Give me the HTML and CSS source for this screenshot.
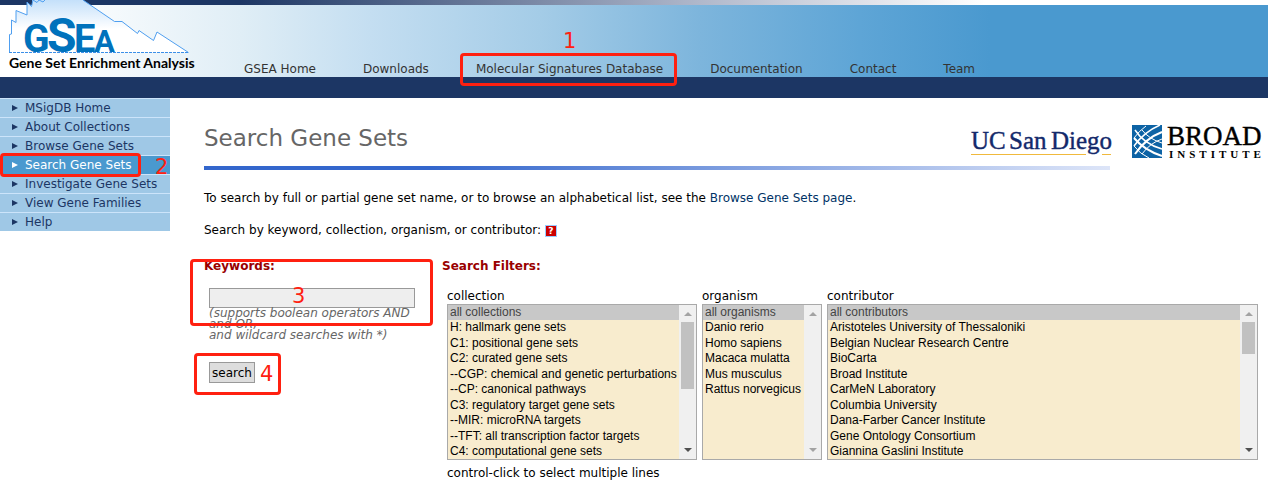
FILE: index.html
```html
<!DOCTYPE html>
<html lang="en">
<head>
<meta charset="utf-8">
<title>GSEA | MSigDB | Search Gene Sets</title>
<link rel="stylesheet" href="styles.css">
</head>
<body>
<div class="top-strip"></div>
<header class="banner">
  <a class="logo" href="#" aria-label="Gene Set Enrichment Analysis">
    <svg width="200" height="77" viewBox="0 0 200 77">
      <defs>
        <linearGradient id="peak" x1="0" y1="0" x2="0" y2="1">
          <stop offset="0" stop-color="#c4e0fa"/>
          <stop offset="0.55" stop-color="#fff"/>
        </linearGradient>
      </defs>
      <path d="M9.500 52.500V34.500L11.500 34V20L16 22.500V10.500L27 15V2L32 6V0H83L114.500 21.500H122L137.500 33.500L139 30.500L153.500 40.500L157 32L188.500 52.500Z" fill="url(#peak)"/>
      <path d="M9.500 52.500V34.500L11.500 34V20L16 22.500V10.500L27 15V2L31.500 6.500L33 0L37 2.500L39 0L43 2L45 0M83 0L114.500 21.500H122L137.500 33.500L139 30.500L153.500 40.500L157 32L188.500 52.500" fill="none" stroke="#4f9ff0" stroke-width="1"/>
      <path d="M9 52.500H189" stroke="#3b8fe8" stroke-dasharray="3 1"/>
      <g class="logo-mark">
        <text x="23" y="52" font-size="39">G</text>
        <text x="47" y="52" font-size="48">S</text>
        <text x="74" y="52" font-size="38">E</text>
        <text x="94" y="52" font-size="31">A</text>
      </g>
      <text class="logo-name" x="9" y="68">Gene Set Enrichment Analysis</text>
    </svg>
  </a>
  <nav class="main-nav">
    <a href="#">GSEA Home</a>
    <a href="#">Downloads</a>
    <a href="#">Molecular Signatures Database</a>
    <a href="#">Documentation</a>
    <a href="#">Contact</a>
    <a href="#">Team</a>
  </nav>
</header>
<div class="navy-bar"></div>
<div class="page">
  <nav class="side-nav">
    <a href="#">MSigDB Home</a>
    <a href="#">About Collections</a>
    <a href="#">Browse Gene Sets</a>
    <a class="current" href="#">Search Gene Sets</a>
    <a href="#">Investigate Gene Sets</a>
    <a href="#">View Gene Families</a>
    <a href="#">Help</a>
  </nav>
  <main class="content">
    <div class="title-row">
      <div class="title">
        <h1>Search Gene Sets</h1>
        <svg class="ucsd" width="141" height="30" viewBox="0 0 141 30" role="img" aria-label="UC San Diego">
          <path d="M0 26.500H115M131 26.500H140" stroke="#f0b93c"/>
          <g class="ucsd-text">
            <text x="0" y="21">UC</text>
            <text x="38" y="21">San</text>
            <text x="80" y="21">Diego</text>
          </g>
        </svg>
      </div>
      <svg class="broad" width="132" height="34" viewBox="0 0 132 34" role="img" aria-label="Broad Institute">
        <rect width="30" height="33" fill="#0d63a5"/>
        <g fill="none" stroke="#fff">
          <path d="M3 5Q12 19 30 24" stroke-width="1.500"/>
          <path d="M2 13Q12 25 30 31" stroke-width="2"/>
          <path d="M10 5Q17 14 30 18"/>
          <path d="M2 21Q8 29 17 33"/>
          <path d="M2 21Q12 7 28 0" stroke-width="1.500"/>
          <path d="M2 13Q7 6 14 1"/>
          <path d="M3 29Q14 13 30 7" stroke-width="2"/>
          <path d="M10 29Q18 18 30 14"/>
        </g>
        <text class="broad-big" x="35" y="20">BROAD</text>
        <text class="broad-small" x="37" y="33">INSTITUTE</text>
      </svg>
    </div>
    <p>To search by full or partial gene set name, or to browse an alphabetical list, see the <a href="#">Browse Gene Sets page</a>.</p>
    <p>Search by keyword, collection, organism, or contributor: <a class="help" href="#" aria-label="Help">?</a></p>
    <form class="search">
      <section class="keywords">
        <h2><label for="keywords">Keywords:</label></h2>
        <div class="keyword-body">
          <input id="keywords" type="text">
          <div class="hint">(supports boolean operators AND and OR,<br>and wildcard searches with *)</div>
          <button type="button">search</button>
        </div>
      </section>
      <section class="filters">
        <h2>Search Filters:</h2>
        <div class="lists">
          <div class="field collection">
            <label for="collection">collection</label>
            <div class="listbox">
              <select id="collection" multiple size="10">
                <option class="all">all collections</option>
                <option>H: hallmark gene sets</option>
                <option>C1: positional gene sets</option>
                <option>C2: curated gene sets</option>
                <option>--CGP: chemical and genetic perturbations</option>
                <option>--CP: canonical pathways</option>
                <option>C3: regulatory target gene sets</option>
                <option>--MIR: microRNA targets</option>
                <option>--TFT: all transcription factor targets</option>
                <option>C4: computational gene sets</option>
              </select>
              <div class="bar"><i class="up"></i><i class="thumb long"></i><i class="down"></i></div>
            </div>
          </div>
          <div class="field organism">
            <label for="organism">organism</label>
            <div class="listbox">
              <select id="organism" multiple size="10">
                <option class="all">all organisms</option>
                <option>Danio rerio</option>
                <option>Homo sapiens</option>
                <option>Macaca mulatta</option>
                <option>Mus musculus</option>
                <option>Rattus norvegicus</option>
              </select>
              <div class="bar"><i class="up"></i><i class="down off"></i></div>
            </div>
          </div>
          <div class="field contributor">
            <label for="contributor">contributor</label>
            <div class="listbox">
              <select id="contributor" multiple size="10">
                <option class="all">all contributors</option>
                <option>Aristoteles University of Thessaloniki</option>
                <option>Belgian Nuclear Research Centre</option>
                <option>BioCarta</option>
                <option>Broad Institute</option>
                <option>CarMeN Laboratory</option>
                <option>Columbia University</option>
                <option>Dana-Farber Cancer Institute</option>
                <option>Gene Ontology Consortium</option>
                <option>Giannina Gaslini Institute</option>
              </select>
              <div class="bar"><i class="up"></i><i class="thumb short"></i><i class="down"></i></div>
            </div>
          </div>
        </div>
        <div class="note">control-click to select multiple lines</div>
      </section>
    </form>
  </main>
</div>
<div class="mark mark-1"></div><div class="num num-1">1</div>
<div class="mark mark-2"></div><div class="num num-2">2</div>
<div class="mark mark-3"></div><div class="num num-3">3</div>
<div class="mark mark-4"></div><div class="num num-4">4</div>
</body>
</html>
```
FILE: styles.css
```css
* { box-sizing: border-box; }
body {
  margin: 0;
  position: relative;
  background: #fff;
  color: #000;
  font: 12px/16px Verdana, "DejaVu Sans", sans-serif;
}
a { text-decoration: none; }
.top-strip {
  height: 5px;
  background: linear-gradient(90deg, #1c3664 240px, #b0b8cb 700px, #fff 985px);
}
.banner {
  height: 72px;
  display: flex;
  align-items: flex-end;
  background: linear-gradient(90deg, #fff 50px, #e0eef6 240px, #c4def1 370px, #a4cce7 540px, #7db5dc 700px, #5ea5d6 860px, #4a99cf 990px);
}
.logo { width: 244px; flex: none; height: 77px; }
.logo svg { display: block; }
.logo-mark { fill: #0072bc; font-family: Roboto, sans-serif; font-weight: 700; }
.logo-name { font: 700 14px Lato, sans-serif; }
.main-nav { display: flex; gap: 47px; }
.main-nav a { color: #333; white-space: nowrap; }
.navy-bar { height: 21px; background: #1c3664; }
.page { display: flex; align-items: flex-start; }
.side-nav { width: 170px; flex: none; }
.side-nav a {
  display: flex;
  align-items: center;
  height: 19px;
  padding-left: 12px;
  border-top: 1px solid #cce4fa;
  background: #9fc8e6;
  color: #1c3664;
  white-space: nowrap;
}
.side-nav a::before {
  content: "";
  margin-right: 7px;
  border: 3px solid transparent;
  border-left: 6px solid currentColor;
  border-right: 0;
}
.side-nav .current { background: #4a99cf; color: #fff; }
.content { flex: 1; padding: 26px 10px 0 34px; }
.title-row { display: flex; margin-right: -6px; }
.title {
  flex: 1;
  display: flex;
  justify-content: space-between;
  margin-right: 22px;
  padding-bottom: 12px;
  background: linear-gradient(90deg, #36c 25%, #dde5f8) bottom / 100% 4px no-repeat;
}
.title .ucsd { margin: 4px -2px 0 0; overflow: visible; }
.broad { margin-top: 1px; overflow: visible; }
.ucsd-text { font: 25px "Liberation Serif", serif; fill: #13296b; stroke: #13296b; stroke-width: 0.400; }
.broad-big { font: 27px "Liberation Serif", serif; stroke: #000; stroke-width: 0.400; }
.broad-small { font: 700 11px "Liberation Serif", serif; letter-spacing: 4px; }
h1 { margin: 0; font-size: 23px; line-height: 28px; font-weight: 400; color: #666; }
p { margin: 20px 0 -4px; }
p a { color: #036; }
.help {
  display: inline-block;
  width: 12px;
  height: 12px;
  border: 1px solid #9cf;
  background: #c00;
  color: #fff;
  font: 700 9px/10px "DejaVu Sans", sans-serif;
  text-align: center;
}
.search { display: flex; margin-top: 24px; }
h2 { margin: 0; font-size: 12px; line-height: 16px; color: #900; }
.keywords { width: 238px; flex: none; }
.keyword-body { width: 211px; padding: 14px 0 0 5px; }
input {
  display: block;
  width: 100%;
  height: 20px;
  border: 1px solid #999;
  background: #eee;
}
.hint { color: #666; font-style: italic; line-height: 11px; }
button {
  display: block;
  margin-top: 21px;
  padding: 0 2px;
  height: 21px;
  border: 1px solid #999;
  background: #ddd;
  color: #000;
  font: inherit;
}
.filters { flex: 1; }
.lists { display: flex; gap: 5px; padding: 14px 0 0 5px; }
.field label { display: block; }
.collection { width: 250px; }
.organism { width: 120px; }
.contributor { flex: 1; }
.listbox { display: flex; border: 1px solid #a9a9a9; }
select {
  flex: 1;
  min-width: 0;
  height: 154px;
  padding: 0;
  border: 0;
  border-radius: 0;
  background: #f8ecce;
  color: #000;
  font: 12px "Liberation Sans", Arial, sans-serif;
  overflow: hidden;
  scrollbar-width: none;
}
option { height: 15px; min-height: 0; padding: 0 2px; line-height: 15px; }
option:nth-child(even) { height: 16px; }
.all { background: #c8c8c8; color: #444; }
.bar {
  width: 17px;
  display: flex;
  flex-direction: column;
  padding: 7px 2px;
  background: #f0f0f0;
}
.up, .down { margin: 0 auto; border: 4px solid transparent; }
.up { border-top: 0; border-bottom-color: #a3a3a3; }
.down { margin-top: auto; border-bottom: 0; border-top-color: #505050; }
.off { border-top-color: #a3a3a3; }
.thumb { margin-top: 6px; background: #c1c1c1; }
.long { height: 67px; }
.short { height: 32px; }
.note { margin: 5px 0 0 5px; }
.mark, .num { position: absolute; color: #ff2010; }
.mark { border: 3px solid; border-radius: 4px; }
.num { font-size: 21px; line-height: 20px; }
.mark-1 { left: 460px; top: 53px; width: 217px; height: 33px; }
.mark-2 { left: 0; top: 153px; width: 141px; height: 24px; }
.mark-3 { left: 190px; top: 259px; width: 243px; height: 67px; }
.mark-4 { left: 194px; top: 353px; width: 87px; height: 42px; }
.num-1 { left: 563px; top: 31px; }
.num-2 { left: 155px; top: 157px; }
.num-3 { left: 292px; top: 286px; }
.num-4 { left: 260px; top: 364px; }
```
